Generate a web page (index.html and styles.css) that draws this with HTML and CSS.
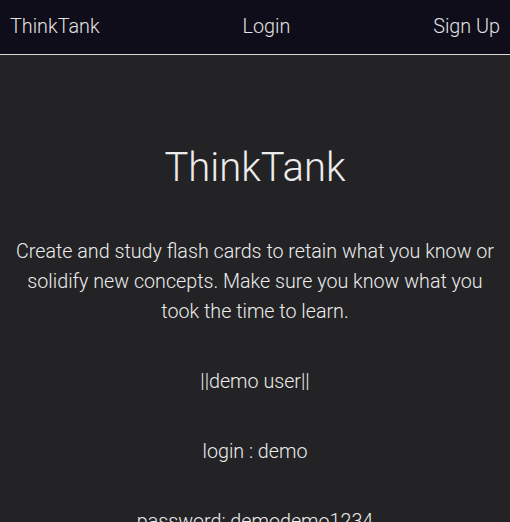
FILE: index.html
```html
<!DOCTYPE html>
<html>
<head>
<meta charset="utf-8">
<link rel="stylesheet" href="styles.css">
</head>
<body>
<nav class="nav">
  <a class="nav-link" href="#">ThinkTank</a>
  <a class="nav-link" href="#">Login</a>
  <a class="nav-link" href="#">Sign Up</a>
</nav>
<main class="hero">
  <h1 class="title">ThinkTank</h1>
  <p class="text">Create and study flash cards to retain what you know or solidify new concepts. Make sure you know what you took the time to learn.</p>
  <p class="text">||demo user||</p>
  <p class="text">login : demo</p>
  <p class="text">password: demodemo1234</p>
</main>
</body>
</html>
```
FILE: styles.css
```css
html, body {
  margin: 0;
  padding: 0;
  background: #232325;
  font-family: Roboto, "Liberation Sans", sans-serif;
  font-weight: 300;
  color: #ececec;
}
.nav {
  display: flex;
  justify-content: space-between;
  align-items: center;
  height: 52px;
  padding: 0 10px 2px;
  background: #0f0d19;
  border-bottom: 1px solid #d8d8d8;
}
.nav-link {
  color: #e2e2e2;
  text-decoration: none;
  font-size: 19.8px;
  font-weight: 300;
}
.hero {
  display: flex;
  flex-direction: column;
  align-items: center;
  text-align: center;
  padding: 89px 12px 0;
}
.title {
  margin: 0 0 46px;
  font-size: 40px;
  font-weight: 300;
  line-height: 47px;
}
.text {
  margin: 0 0 40px;
  font-size: 19.7px;
  line-height: 30px;
}
```
